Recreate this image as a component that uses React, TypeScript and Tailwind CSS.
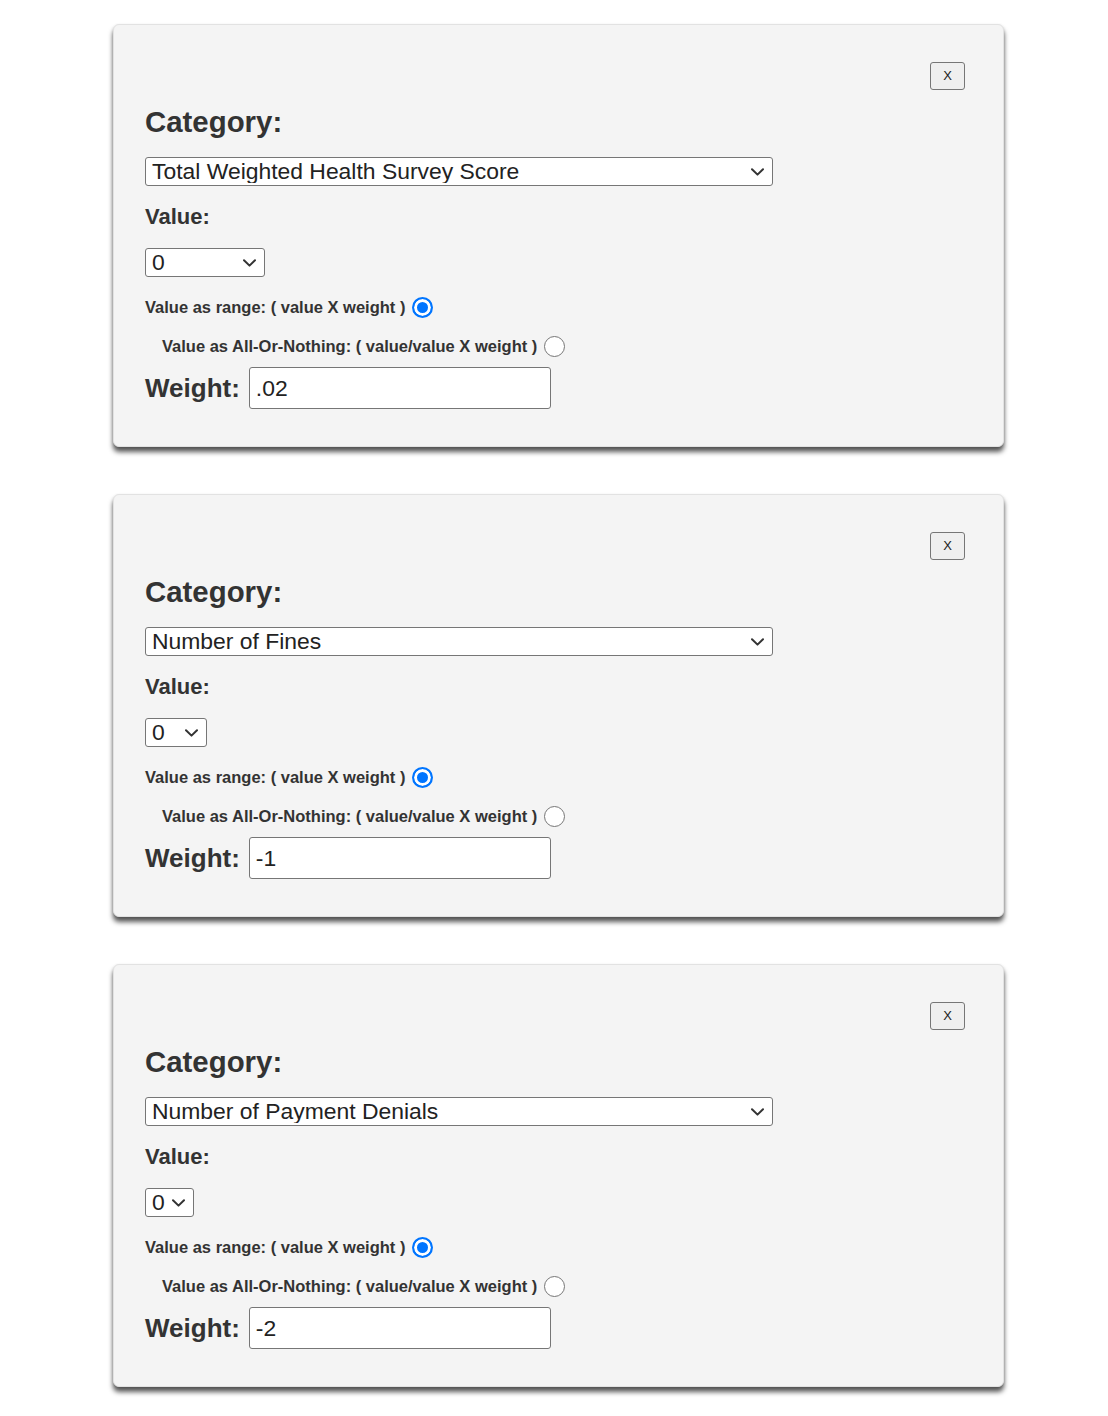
import { useState } from "react";

type Rule = {
  category: string;
  value: string;
  valueWidth: string;
  weight: string;
};

const rules: Rule[] = [
  { category: "Total Weighted Health Survey Score", value: "0", valueWidth: "w-[120px]", weight: ".02" },
  { category: "Number of Fines", value: "0", valueWidth: "w-[62px]", weight: "-1" },
  { category: "Number of Payment Denials", value: "0", valueWidth: "w-[49px]", weight: "-2" },
];

function Chevron() {
  return (
    <svg
      className="pointer-events-none absolute right-[9px] top-1/2 h-[8px] w-[13px] -translate-y-1/2"
      viewBox="0 0 13 8"
      fill="none"
    >
      <path d="M1 1.2 6.5 6.6 12 1.2" stroke="#333" strokeWidth="2" strokeLinecap="round" strokeLinejoin="round" />
    </svg>
  );
}

function Select({ value, options, className }: { value: string; options: string[]; className: string }) {
  return (
    <div className={`relative h-[29px] ${className}`}>
      <select
        defaultValue={value}
        className="h-full w-full appearance-none rounded-[3px] border border-[#767676] bg-white pl-[6px] pr-[26px] text-[22.9px] leading-none text-[#222] outline-none"
      >
        {options.map((o) => (
          <option key={o}>{o}</option>
        ))}
      </select>
      <Chevron />
    </div>
  );
}

function RuleCard({ rule, name }: { rule: Rule; name: string }) {
  const [mode, setMode] = useState("range");

  return (
    <section className="rounded-[6px] border border-[#e2e2e2] bg-[#f4f4f4] px-[31px] pb-[37px] pt-[37px] shadow-[0_5px_5px_rgba(0,0,0,0.65),0_1px_3px_rgba(0,0,0,0.12)]">
      <div className="flex justify-end pr-[7px]">
        <button className="h-[28px] w-[35px] rounded-[3px] border border-[#767676] bg-[#efefef] text-[13px] text-[#222]">
          X
        </button>
      </div>

      <h2 className="mt-[15px] text-[29.4px] font-bold leading-[34px]">Category:</h2>
      <Select value={rule.category} options={[rule.category]} className="mt-[18px] w-[628px]" />

      <h3 className="mt-[18px] text-[22px] font-bold leading-[26px]">Value:</h3>
      <Select value={rule.value} options={["0", "1", "2"]} className={`mt-[18px] ${rule.valueWidth}`} />

      <label className="mt-[18px] flex h-[24px] items-center text-[16.5px] font-bold">
        Value as range: ( value X weight )
        <input
          type="radio"
          name={name}
          checked={mode === "range"}
          onChange={() => setMode("range")}
          className="ml-[7px] h-[21px] w-[21px] appearance-none rounded-full border-[1.5px] border-[#767676] bg-white checked:border-2 checked:border-[#0075ff] checked:bg-[#0075ff] checked:shadow-[inset_0_0_0_3px_white]"
        />
      </label>

      <label className="ml-[17px] mt-[15px] flex h-[24px] items-center text-[16.5px] font-bold">
        Value as All-Or-Nothing: ( value/value X weight )
        <input
          type="radio"
          name={name}
          checked={mode === "all"}
          onChange={() => setMode("all")}
          className="ml-[7px] h-[21px] w-[21px] appearance-none rounded-full border-[1.5px] border-[#767676] bg-white checked:border-2 checked:border-[#0075ff] checked:bg-[#0075ff] checked:shadow-[inset_0_0_0_3px_white]"
        />
      </label>

      <div className="mt-[9px] flex items-center gap-[9px]">
        <span className="text-[26px] font-bold leading-none">Weight:</span>
        <input
          defaultValue={rule.weight}
          className="h-[42px] w-[302px] rounded-[3px] border border-[#767676] bg-white px-[6px] text-[22.9px] text-[#222] outline-none"
        />
      </div>
    </section>
  );
}

export default function App() {
  return (
    <div className="min-h-screen bg-white pl-[113px] pt-[24px] pb-[24px] font-['Liberation_Sans',Arial,sans-serif] text-[#333]">
      <div className="flex w-[891px] flex-col gap-[47px]">
        {rules.map((r, i) => (
          <RuleCard key={i} rule={r} name={`mode-${i}`} />
        ))}
      </div>
    </div>
  );
}
